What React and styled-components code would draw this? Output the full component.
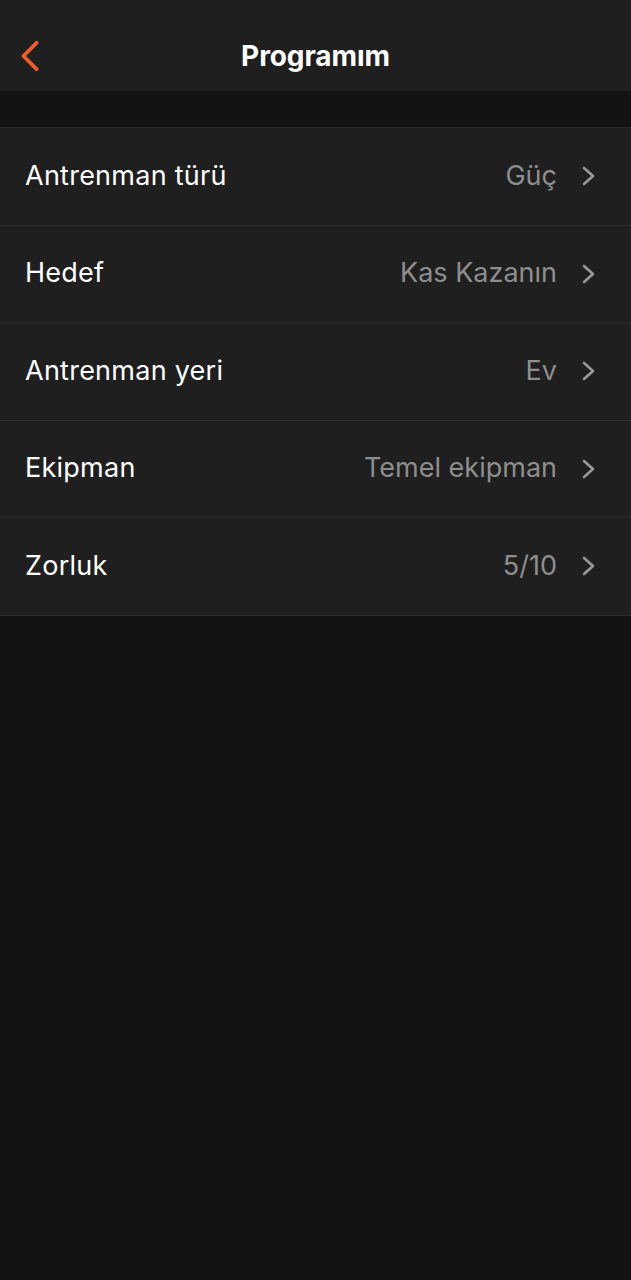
import React from 'react';
import styled, { createGlobalStyle } from 'styled-components';

const Global = createGlobalStyle`
    body {
        margin: 0;
        background: #121212;
        font-family: Inter, "Noto Sans", sans-serif;
    }
`;

const Page = styled.div`
    min-height: 1280px;
    background: #121212;
`;

const Header = styled.header`
    height: 91px;
    background: #1f1f1f;
    display: flex;
    align-items: center;
    justify-content: center;
    position: relative;
`;

const Back = styled.button`
    position: absolute;
    left: 14px;
    top: 38px;
    width: 32px;
    height: 36px;
    border: 0;
    padding: 0;
    background: none;
    display: flex;
    align-items: center;
    justify-content: center;
`;

const Title = styled.h1`
    margin: 0;
    color: #ffffff;
    font-size: 28px;
    font-weight: 700;
    letter-spacing: -0.1px;
    padding-top: 20px;
`;

const Spacer = styled.div`
    height: 36px;
`;

const List = styled.ul`
    list-style: none;
    margin: 0;
    padding: 0;
    border-top: 1px solid #2d2d2d;
`;

const Row = styled.li`
    height: 96.5px;
    display: flex;
    align-items: center;
    padding: 0 35px 0 25px;
    background: #1f1f1f;
    border-bottom: 1px solid #2d2d2d;
`;

const Label = styled.span`
    flex: 1;
    color: #ffffff;
    font-size: 27px;
    letter-spacing: 0.25px;
    font-weight: 400;
    margin-top: -2px;
`;

const Value = styled.span`
    color: #8e8e8e;
    font-size: 27px;
    margin-right: 24px;
    margin-top: -2px;
`;

const Chevron = ({ color = '#9a9a9a', dir = 'right', w = 15, h = 22 }) => (
    <svg width={w} height={h} viewBox="0 0 15 22" fill="none">
        <path
            d={dir === 'right' ? 'M3 3 L12 11 L3 19' : 'M12 2 L3 11 L12 20'}
            stroke={color}
            strokeWidth="2.6"
            strokeLinecap="round"
            strokeLinejoin="round"
        />
    </svg>
);

const items = [
    ['Antrenman türü', 'Güç'],
    ['Hedef', 'Kas Kazanın'],
    ['Antrenman yeri', 'Ev'],
    ['Ekipman', 'Temel ekipman'],
    ['Zorluk', '5/10'],
];

const App = () => (
    <Page>
        <Global />
        <Header>
            <Back aria-label="Geri">
                <Chevron color="#ec5d2a" dir="left" w={22} h={34} />
            </Back>
            <Title>Programım</Title>
        </Header>
        <Spacer />
        <List>
            {items.map(([label, value]) => (
                <Row key={label}>
                    <Label>{label}</Label>
                    <Value>{value}</Value>
                    <Chevron />
                </Row>
            ))}
        </List>
    </Page>
);

export default App;
